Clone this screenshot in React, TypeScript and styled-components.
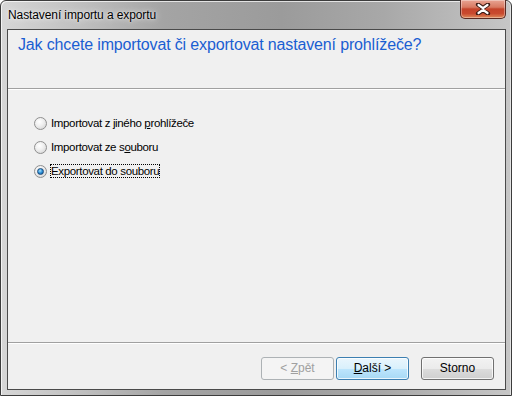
import { FC } from 'react';
import styled, { createGlobalStyle } from 'styled-components';

const GlobalStyle = createGlobalStyle`
  html, body {
    margin: 0;
    padding: 0;
    background: #ffffff;
  }
  body {
    font-family: "Liberation Sans", Arial, sans-serif;
  }
`;

const options = [
  { label: 'Importovat z jiného ', key: 'p', rest: 'rohlížeče', checked: false },
  { label: 'Importovat ze s', key: 'o', rest: 'uboru', checked: false },
  { label: 'Exportovat do souboru', key: '', rest: '', checked: true },
];

const App: FC = () => {
  return (
    <>
      <GlobalStyle />
      <Window>
        <TitleBar>
          <Caption>Nastavení importu a exportu</Caption>
          <CloseButton>
            <svg width="16" height="12" viewBox="0 0 16 12">
              <path
                d="M3 1.5 L8 5 L13 1.5 M3 10.5 L8 7 L13 10.5"
                stroke="#3a1a14"
                strokeWidth="4.2"
                strokeLinecap="round"
                fill="none"
              />
              <path
                d="M3.5 2 L8 5.2 L12.5 2 M3.5 10 L8 6.8 L12.5 10"
                stroke="#ffffff"
                strokeWidth="2.2"
                strokeLinecap="round"
                fill="none"
              />
            </svg>
          </CloseButton>
        </TitleBar>
        <Client>
          <Header>
            <Heading>Jak chcete importovat či exportovat nastavení prohlížeče?</Heading>
          </Header>
          <Separator />
          <Body>
            {options.map((o) => (
              <RadioRow key={o.label}>
                <RadioCircle $checked={o.checked} />
                <RadioLabel $focused={o.checked}>
                  {o.label}
                  {o.key && <u>{o.key}</u>}
                  {o.rest}
                </RadioLabel>
              </RadioRow>
            ))}
          </Body>
          <Separator />
          <Footer>
            <Button $variant="disabled">
              &lt; <u>Z</u>pět
            </Button>
            <Button $variant="default">
              <u>D</u>alší &gt;
            </Button>
            <Button $variant="normal" $gap>
              Storno
            </Button>
          </Footer>
        </Client>
      </Window>
    </>
  );
};

const Window = styled.div`
  box-sizing: border-box;
  width: 512px;
  height: 396px;
  display: flex;
  flex-direction: column;
  padding: 0 5px 5px 6px;
  border: 1px solid #3c3c3c;
  border-radius: 6px 6px 0 0;
  background: linear-gradient(
    to right,
    #d6d6d6 0%,
    #c2c2c2 14%,
    #a4a4a4 32%,
    #9b9b9b 55%,
    #a8a8a8 75%,
    #c6c6c6 100%
  );
  box-shadow: inset 1px 1px 0 rgba(255, 255, 255, 0.7), inset -1px 0 0 rgba(255, 255, 255, 0.5);
`;

const TitleBar = styled.div`
  height: 28px;
  display: flex;
  align-items: flex-start;
  justify-content: space-between;
  flex-shrink: 0;
`;

const Caption = styled.span`
  margin: 7px 0 0 1px;
  font-size: 12px;
  letter-spacing: -0.1px;
  color: #000;
  text-shadow: 0 0 6px rgba(255, 255, 255, 0.9), 0 0 2px rgba(255, 255, 255, 0.8);
`;

const CloseButton = styled.div`
  box-sizing: border-box;
  width: 46px;
  height: 19px;
  margin-top: -1px;
  display: flex;
  align-items: center;
  justify-content: center;
  border: 1px solid #5a2a22;
  border-top: none;
  border-radius: 0 0 5px 5px;
  background: linear-gradient(
    to bottom,
    #e8a493 0%,
    #d87a62 40%,
    #c4432a 50%,
    #c94a2f 75%,
    #dd8a5a 100%
  );
  box-shadow: inset 0 0 0 1px rgba(255, 255, 255, 0.35);
`;

const Client = styled.div`
  flex: 1;
  display: flex;
  flex-direction: column;
  border: 1px solid #4a4a4a;
  background: #f0f0f0;
  min-height: 0;
`;

const Header = styled.div`
  height: 58px;
  padding: 6px 0 0 10px;
  box-sizing: border-box;
`;

const Heading = styled.div`
  font-size: 16px;
  color: #1a5ed2;
  letter-spacing: -0.15px;
`;

const Separator = styled.div`
  height: 1px;
  background: #a0a0a0;
  border-bottom: 1px solid #ffffff;
`;

const Body = styled.div`
  flex: 1;
  display: flex;
  flex-direction: column;
  gap: 8px;
  padding: 25px 0 0 26px;
`;

const RadioRow = styled.div`
  display: flex;
  align-items: center;
  height: 16px;
  gap: 3px;
`;

const RadioCircle = styled.span<{ $checked: boolean }>`
  position: relative;
  box-sizing: border-box;
  width: 13px;
  height: 13px;
  border-radius: 50%;
  border: 1px solid #8f8f8f;
  background: radial-gradient(circle at 40% 35%, #ffffff 0%, #f0f0f0 40%, #cfcfcf 100%);
  &::after {
    content: '';
    display: ${(p) => (p.$checked ? 'block' : 'none')};
    position: absolute;
    left: 2px;
    top: 2px;
    width: 7px;
    height: 7px;
    box-sizing: border-box;
    border-radius: 50%;
    border: 1px solid #1c4a7a;
    background: radial-gradient(circle at 40% 35%, #a9e4ff 0%, #2c8ed6 50%, #0e4f8c 100%);
  }
`;

const RadioLabel = styled.span<{ $focused: boolean }>`
  font-size: 11.5px;
  color: #000;
  padding: 1px 1px;
  letter-spacing: -0.35px;
  outline: ${(p) => (p.$focused ? '1px dotted #000' : 'none')};
  outline-offset: -1px;
`;

const Footer = styled.div`
  height: 45px;
  display: flex;
  align-items: center;
  justify-content: flex-end;
  gap: 2px;
  padding-right: 11px;
`;

const Button = styled.button<{ $variant: 'disabled' | 'default' | 'normal'; $gap?: boolean }>`
  box-sizing: border-box;
  width: 73px;
  height: 23px;
  margin-left: ${(p) => (p.$gap ? '10px' : '0')};
  margin-top: 3px;
  font-family: "Liberation Sans", Arial, sans-serif;
  font-size: 12px;
  border-radius: 3px;
  padding: 0;
  color: ${(p) => (p.$variant === 'disabled' ? '#a0a0a0' : '#000')};
  border: 1px solid
    ${(p) =>
      p.$variant === 'disabled' ? '#adb2b5' : p.$variant === 'default' ? '#3c7fb1' : '#707070'};
  background: ${(p) =>
    p.$variant === 'disabled'
      ? '#f4f4f4'
      : p.$variant === 'default'
      ? 'linear-gradient(to bottom, #eaf6fd 0%, #d9f0fc 50%, #bee6fd 50%, #a7d9f5 100%)'
      : 'linear-gradient(to bottom, #f2f2f2 0%, #ebebeb 50%, #dddddd 50%, #cfcfcf 100%)'};
  box-shadow: ${(p) =>
    p.$variant === 'disabled' ? 'none' : 'inset 0 0 0 1px rgba(255, 255, 255, 0.75)'};
`;

export default App;
